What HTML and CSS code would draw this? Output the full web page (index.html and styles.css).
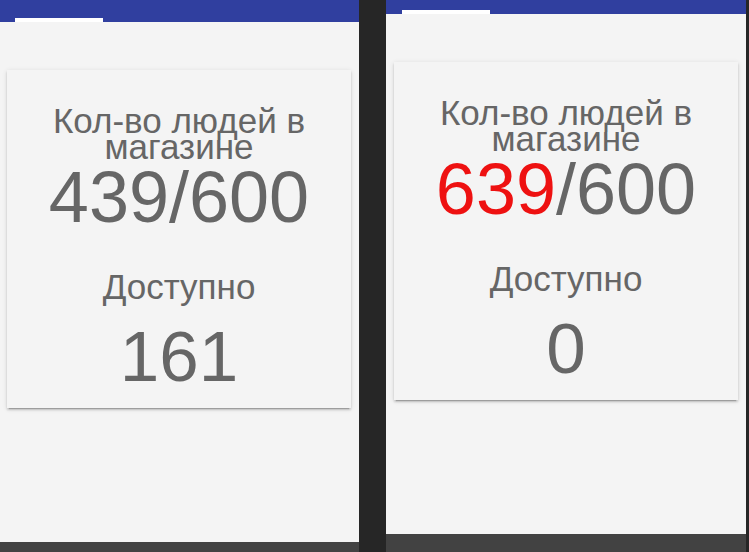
FILE: index.html
```html
<!DOCTYPE html>
<html lang="ru">
<head>
<meta charset="utf-8">
<link rel="stylesheet" href="styles.css">
</head>
<body>
<div class="screen">
  <div class="window window-left">
    <div class="page">
      <div class="appbar appbar-tall"><div class="tab-indicator"></div></div>
      <div class="content">
        <div class="card">
          <div class="title">Кол-во людей в магазине</div>
          <div class="count"><span>439</span>/600</div>
          <div class="label">Доступно</div>
          <div class="value">161</div>
        </div>
      </div>
    </div>
    <div class="taskbar taskbar-left"></div>
  </div>
  <div class="window window-right">
    <div class="page">
      <div class="appbar appbar-short"><div class="tab-indicator"></div></div>
      <div class="content">
        <div class="card">
          <div class="title">Кол-во людей в магазине</div>
          <div class="count"><span class="over">639</span>/600</div>
          <div class="label">Доступно</div>
          <div class="value">0</div>
        </div>
      </div>
    </div>
    <div class="taskbar taskbar-right"></div>
  </div>
</div>
</body>
</html>
```
FILE: styles.css
```css
html, body {
  margin: 0;
  padding: 0;
  height: 100%;
}
body {
  background: #262626;
  font-family: "Liberation Sans", Arial, sans-serif;
  overflow: hidden;
}
.screen {
  display: flex;
  gap: 27px;
  height: 552px;
}
.window {
  display: flex;
  flex-direction: column;
  width: 359px;
}
.window-right {
  width: 360px;
}
.page {
  flex: 1;
  background: #f4f4f4;
  display: flex;
  flex-direction: column;
}
.appbar {
  background: #303f9f;
  display: flex;
  align-items: flex-end;
  padding-left: 15px;
}
.appbar-tall { height: 22px; }
.appbar-short { height: 14px; padding-left: 16px; }
.tab-indicator {
  width: 88px;
  height: 4px;
  background: #ffffff;
}
.content {
  padding: 48px 8px 0 7px;
}
.window-right .content {
  padding-left: 8px;
}
.card {
  background: #f4f4f4;
  box-shadow: 0 2px 2px rgba(0,0,0,.14), 0 3px 1px -2px rgba(0,0,0,.2), 0 1px 5px rgba(0,0,0,.12);
  height: 338px;
  box-sizing: border-box;
  padding-top: 38px;
  text-align: center;
  color: #666666;
}
.title {
  font-size: 35px;
  line-height: 26px;
  padding: 0 30px;
}
.count {
  font-size: 72px;
  line-height: 72px;
  margin-top: 1px;
}
.over {
  color: #ee1111;
}
.label {
  font-size: 35px;
  line-height: 35px;
  margin-top: 36px;
}
.value {
  font-size: 71px;
  line-height: 71px;
  margin-top: 17px;
}
.taskbar {
  background: #424242;
}
.taskbar-left { height: 10px; }
.taskbar-right { height: 18px; }
```
